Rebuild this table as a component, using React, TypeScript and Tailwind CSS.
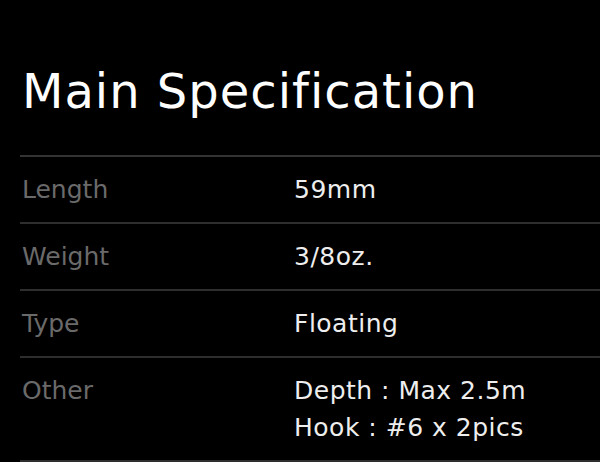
import React from "react";

interface SpecRow {
  label: string;
  values: string[];
}

const specs: SpecRow[] = [
  { label: "Length", values: ["59mm"] },
  { label: "Weight", values: ["3/8oz."] },
  { label: "Type", values: ["Floating"] },
  { label: "Other", values: ["Depth : Max 2.5m", "Hook : #6 x 2pics"] },
];

const App: React.FC = () => {
  return (
    <div className="w-[600px] h-[462px] overflow-hidden bg-black font-['DejaVu_Sans',sans-serif]">
      <div className="pl-5 pt-[63px]">
        <h1 className="pl-[2px] text-[48px] leading-[57px] tracking-[1px] text-white font-normal mb-[35px]">
          Main Specification
        </h1>
        <div className="border-t-2 border-[#333333]">
          {specs.map((row) => (
            <div
              key={row.label}
              className="flex py-[14px] border-b-2 border-[#2e2e2e] text-[25px] leading-[37px]"
            >
              <div className="w-[274px] pl-[2px] text-[#6a6a6a]">{row.label}</div>
              <div className="text-[#eeeeee] tracking-[0.5px]">
                {row.values.map((v) => (
                  <div key={v}>{v}</div>
                ))}
              </div>
            </div>
          ))}
        </div>
      </div>
    </div>
  );
};

export default App;
